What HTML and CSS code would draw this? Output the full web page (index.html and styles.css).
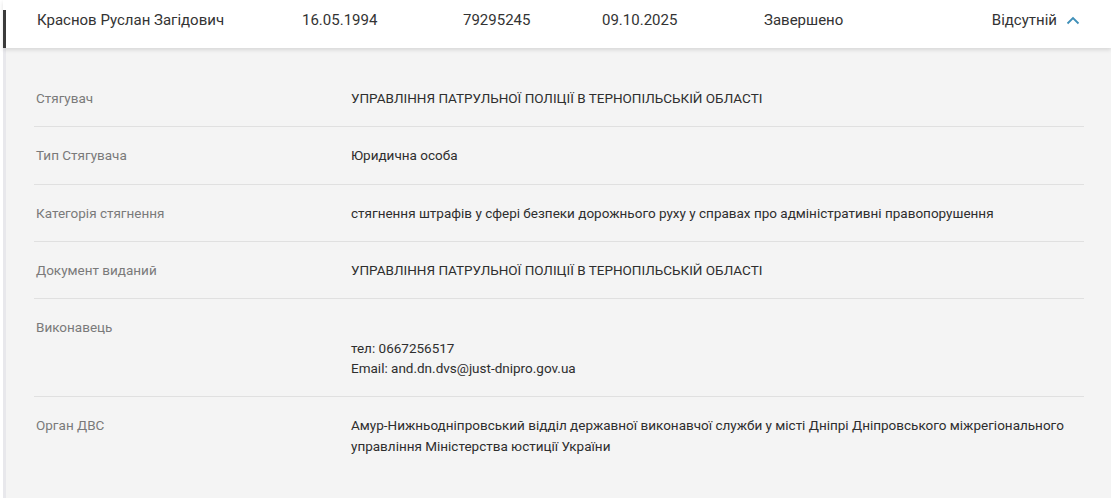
FILE: index.html
```html
<!DOCTYPE html>
<html lang="uk">
<head>
<meta charset="utf-8">
<link rel="stylesheet" href="styles.css">
</head>
<body>
<div class="card">
  <div class="head">
    <div class="cell">Краснов Руслан Загідович</div>
    <div class="cell">16.05.1994</div>
    <div class="cell">79295245</div>
    <div class="cell">09.10.2025</div>
    <div class="cell">Завершено</div>
    <div class="cell end">Відсутній
      <svg class="chev" width="14" height="9" viewBox="0 0 14 9"><path d="M1.5 7.5 L7 2 L12.5 7.5" fill="none" stroke="#3f8fb8" stroke-width="1.8"/></svg>
    </div>
  </div>
  <div class="details">
    <div class="row"><div class="label">Стягувач</div><div class="value">УПРАВЛІННЯ ПАТРУЛЬНОЇ ПОЛІЦІЇ В ТЕРНОПІЛЬСЬКІЙ ОБЛАСТІ</div></div>
    <div class="row"><div class="label">Тип Стягувача</div><div class="value">Юридична особа</div></div>
    <div class="row"><div class="label">Категорія стягнення</div><div class="value">стягнення штрафів у сфері безпеки дорожнього руху у справах про адміністративні правопорушення</div></div>
    <div class="row"><div class="label">Документ виданий</div><div class="value">УПРАВЛІННЯ ПАТРУЛЬНОЇ ПОЛІЦІЇ В ТЕРНОПІЛЬСЬКІЙ ОБЛАСТІ</div></div>
    <div class="row"><div class="label">Виконавець</div><div class="value"><br>тел: 0667256517<br>Email: and.dn.dvs@just-dnipro.gov.ua</div></div>
    <div class="row last"><div class="label">Орган ДВС</div><div class="value">Амур-Нижньодніпровський відділ державної виконавчої служби у місті Дніпрі Дніпровського міжрегіонального управління Міністерства юстиції України</div></div>
  </div>
</div>
</body>
</html>
```

FILE: styles.css
```css
html, body {
  margin: 0;
  padding: 0;
  background: #ffffff;
}
body {
  font-family: Roboto, "Liberation Sans", sans-serif;
  color: #333333;
}
.card {
  padding-left: 3px;
  width: 1108px;
}
.head {
  position: relative;
  z-index: 1;
  height: 40px;
  padding: 0 31px 8px 34px;
  background: #ffffff;
  display: grid;
  grid-template-columns: 265px 161px 139px 162px 1fr auto;
  align-items: center;
  font-size: 15px;
  color: #333333;
  box-shadow: 0 2px 4px rgba(0,0,0,0.12);
}
.head::before {
  content: "";
  position: absolute;
  left: 0;
  top: 10px;
  bottom: 0;
  width: 3px;
  background: #3a3a3a;
}
.head .end {
  display: flex;
  align-items: center;
  gap: 9px;
}
.chev {
  display: block;
}
.details {
  background: #f4f4f4;
  border-left: 3px solid #e8e8ec;
  padding: 22px 27px 24px 28px;
  font-size: 14px;
}
.row {
  display: grid;
  grid-template-columns: 315px 1fr;
  padding: 18px 0 18px 2px;
  line-height: 20.33px;
  border-bottom: 1px solid #e0e0e0;
}
.row.last {
  border-bottom: none;
}
.label {
  color: #7a7a7a;
  font-size: 13.5px;
}
.value {
  color: #2e2e2e;
  font-size: 13.5px;
}
```
